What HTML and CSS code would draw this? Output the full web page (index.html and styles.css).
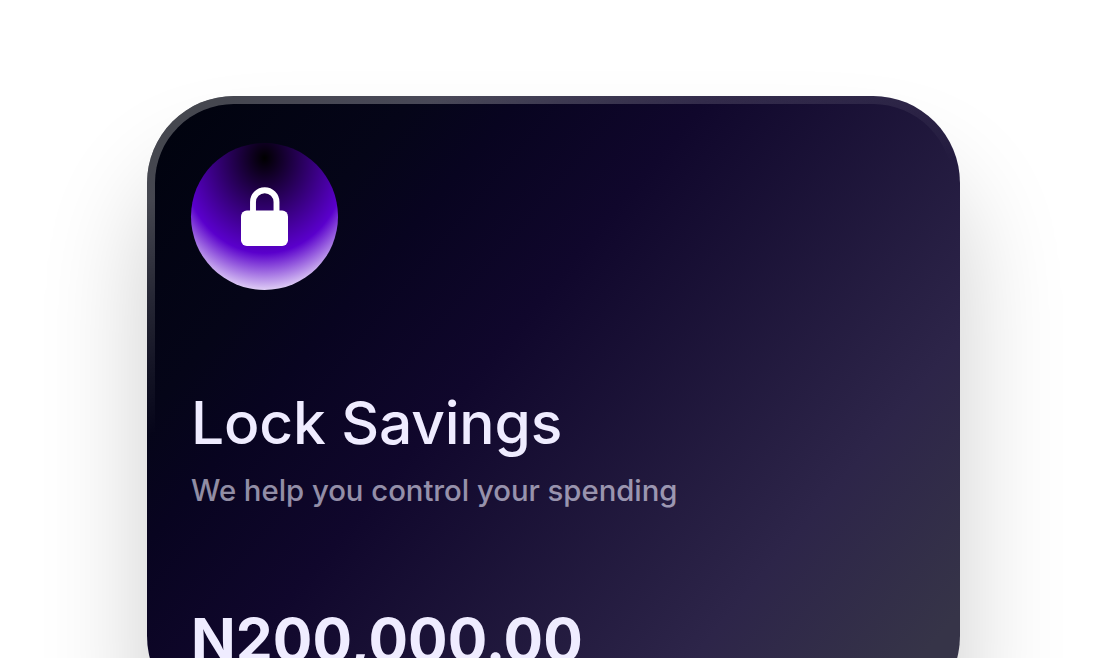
FILE: index.html
```html
<!DOCTYPE html>
<html lang="en">
<head>
<meta charset="utf-8">
<title>Lock Savings</title>
<link rel="stylesheet" href="styles.css">
</head>
<body>
<main class="page">
  <section class="card">
    <div class="badge">
      <svg class="lock" width="48" height="60" viewBox="0 0 48 60" aria-hidden="true">
        <path d="M12 27V15a11.75 11.75 0 0 1 23.5 0v12" fill="none" stroke="#fff" stroke-width="5.9"/>
        <rect x="0" y="23.6" width="47" height="35.4" rx="5.8" fill="#fff"/>
      </svg>
    </div>
    <h1 class="title">Lock Savings</h1>
    <p class="subtitle">We help you control your spending</p>
    <p class="amount">N200,000.00</p>
  </section>
</main>
</body>
</html>
```

FILE: styles.css
```css
* {
  box-sizing: border-box;
}

body {
  margin: 0;
  background: #fff;
  font-family: Inter, "Liberation Sans", sans-serif;
}

.page {
  height: 658px;
  padding: 96px 147px 0;
  overflow: hidden;
}

.card {
  position: relative;
  width: 813px;
  height: 627px;
  padding: 47px 44px 0;
  border-radius: 87px;
  color: #efecff;
  background: linear-gradient(130deg, #01030f 4%, #050518 20%, #080420 28%, #10072c 42%, #2d2549 76%, #363448 93%);
  box-shadow: 0 78px 106px rgba(0, 0, 0, 0.2);
}

/* Gradient rim that fades towards the bottom */
.card::before {
  content: "";
  position: absolute;
  inset: 0;
  padding: 8px;
  border-radius: inherit;
  background: linear-gradient(161deg, rgba(255, 255, 255, 0.27) 11.5%, rgba(255, 255, 255, 0.145) 22%, rgba(255, 255, 255, 0.065) 30%, rgba(255, 255, 255, 0) 38%);
  -webkit-mask: linear-gradient(#000 0 0) content-box, linear-gradient(#000 0 0);
  -webkit-mask-composite: xor;
  mask-composite: exclude;
  pointer-events: none;
}

.badge {
  display: flex;
  width: 147px;
  height: 147px;
  padding: 44px 0 0 50px;
  border-radius: 50%;
  background: radial-gradient(122px 141px at 50% 15px, #000 0%, #5a00cc 67.5%, #fff 100%);
}

.title,
.subtitle,
.amount {
  margin: 0;
  white-space: nowrap;
}

.title {
  margin-top: 97px;
  font-size: 58.7px;
  line-height: 71px;
  font-weight: 500;
  letter-spacing: -0.16px;
}

.subtitle {
  margin-top: 15px;
  font-size: 29.3px;
  line-height: 35px;
  font-weight: 500;
  letter-spacing: -0.02px;
  color: rgba(239, 236, 255, 0.6);
}

.amount {
  margin-top: 96px;
  font-size: 58.7px;
  line-height: 71px;
  font-weight: 700;
  letter-spacing: 0.08px;
}
```
